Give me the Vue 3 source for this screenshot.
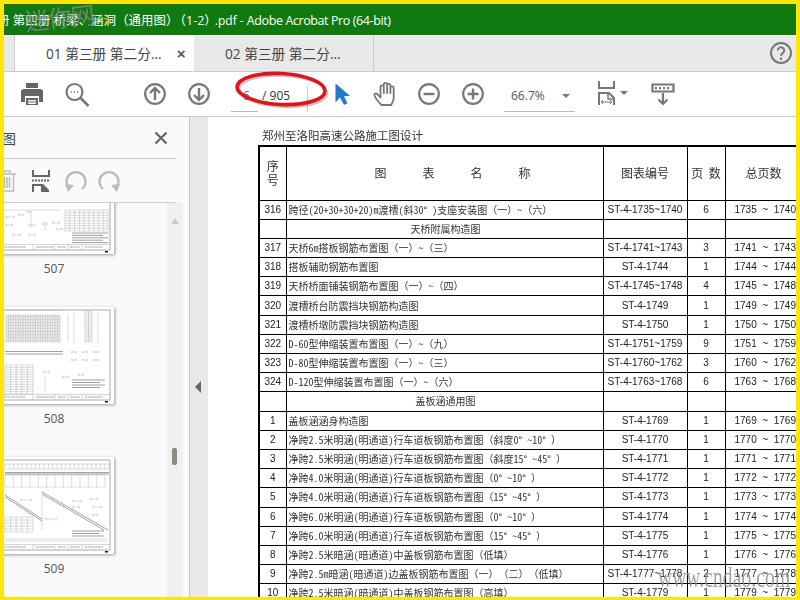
<template>
  <div class="frame">
    <div class="titlebar"><span class="t-cjk">册 第四册 桥梁、涵洞（通用图）</span><span class="t-cjk t-part">（1-2）</span><span class="t-pdf">.pdf - </span><span class="t-app">Adobe Acrobat Pro (64-bit)</span></div>

    <div class="tabs">
      <div class="tab active"><span>01 第三册 第二分...</span><b class="close">×</b></div>
      <div class="tab"><span>02 第三册 第二分...</span></div>
      <svg class="help" viewBox="0 0 24 24" width="24" height="24">
        <circle cx="12" cy="12" r="10" fill="none" stroke="#777" stroke-width="2" />
        <path d="M8.8 9.5a3.2 3.2 0 1 1 5 2.6c-1.200.8-1.800 1.300-1.800 2.700" fill="none" stroke="#777" stroke-width="2" />
        <circle cx="12" cy="17.800" r="1.300" fill="#777" />
      </svg>
    </div>

    <div class="toolbar">
      <svg class="tool print" viewBox="0 0 32 32">
        <path d="M10 5h12v5H10z" fill="#666" />
        <path d="M8 11h16a3 3 0 0 1 3 3v10h-4v-6H9v6H5V14a3 3 0 0 1 3-3z" fill="#666" />
        <path d="M10 20h12v7H10z" fill="#666" /><path d="M12 22h8v1.500h-8zM12 24.500h8V26h-8z" fill="#fff" />
      </svg>
      <svg class="tool search" viewBox="0 0 32 32">
        <circle cx="13.500" cy="14" r="8" fill="none" stroke="#777" stroke-width="2.200" />
        <path d="M19.500 20l8 8" stroke="#777" stroke-width="2.600" />
        <path d="M9.800 14h1.300M12.900 14h1.300M16 14h1.300" stroke="#777" stroke-width="1.400" />
      </svg>
      <svg class="tool up" viewBox="0 0 32 32">
        <circle cx="16" cy="16" r="9.800" fill="none" stroke="#777" stroke-width="2.200" />
        <path d="M16 22V10M11 15l5-5 5 5" fill="none" stroke="#777" stroke-width="2.400" />
      </svg>
      <svg class="tool down" viewBox="0 0 32 32">
        <circle cx="16" cy="16" r="9.800" fill="none" stroke="#777" stroke-width="2.200" />
        <path d="M16 10v12M11 17l5 5 5-5" fill="none" stroke="#777" stroke-width="2.400" />
      </svg>
      <div class="field">6</div>
      <div class="count">/ 905</div>
      <svg class="tool cursor" viewBox="0 0 32 32">
        <path d="M9.500 5.500v19l4.500-5 4 7.500 3.500-1.800-3.500-7 6-.4z" fill="#2678c8" />
      </svg>
      <svg class="tool hand" viewBox="0 0 32 32">
        <path transform="translate(2.500 0)" d="M11 27c-2-2-6-7-7-9.500-.6-1.700 1.500-2.700 2.800-1.400L10 19.500V9c0-2.300 3.300-2.300 3.300 0v6V6.500c0-2.300 3.300-2.300 3.300 0V15 7.500c0-2.300 3.300-2.300 3.300 0V15 10c0-2.300 3.300-2.300 3.300 0v10c0 3-1.500 5-2.600 7z" fill="none" stroke="#777" stroke-width="1.800" stroke-linejoin="round" />
      </svg>
      <svg class="tool minus" viewBox="0 0 32 32">
        <circle cx="16" cy="16" r="9.800" fill="none" stroke="#777" stroke-width="2.200" />
        <path d="M10.500 16h11" stroke="#777" stroke-width="2.400" />
      </svg>
      <svg class="tool plus" viewBox="0 0 32 32">
        <circle cx="16" cy="16" r="9.800" fill="none" stroke="#777" stroke-width="2.200" />
        <path d="M10.500 16h11M16 10.500v11" stroke="#777" stroke-width="2.400" />
      </svg>
      <div class="zoomsel"><span>66.7%</span><i class="caret"></i></div>
      <svg class="fit" viewBox="0 0 40 32" width="40" height="32">
        <path d="M9 3v7h15V3" fill="none" stroke="#777" stroke-width="2" />
        <path d="M9 27V15h10l5 5v7" fill="none" stroke="#777" stroke-width="2" />
        <path d="M18 15v6h6" fill="none" stroke="#777" stroke-width="1.500" />
        <path d="M11 24h11M13 22l-2 2 2 2M20 22l2 2-2 2" fill="none" stroke="#777" stroke-width="1" />
        <path d="M30 13h8l-4 4z" fill="#777" />
      </svg>
      <svg class="tool keys" viewBox="0 0 32 32">
        <path d="M5.500 6.500h21v7h-21z" fill="none" stroke="#777" stroke-width="2.200" />
        <path d="M8 9h2v2.200H8zM12 9h2v2.200h-2zM16 9h2v2.200h-2zM20 9h2v2.200h-2z" fill="#777" />
        <path d="M16 15v11M11.500 21.500L16 26l4.500-4.500" fill="none" stroke="#777" stroke-width="2.200" />
      </svg>
    </div>

    <div class="body">
      <aside class="pane">
        <div class="pane-head">
          <span class="pane-title">图</span>
          <svg class="pane-close" viewBox="0 0 14 14" width="14" height="14"><path d="M1.500 1.500l11 11M12.500 1.500l-11 11" stroke="#666" stroke-width="2.200" /></svg>
        </div>
        <div class="pane-tools">
          <svg class="trash" viewBox="0 0 20 24" width="20" height="24">
            <path d="M1 5h18M7 5V2h6v3M3.500 5v17h13V5M7.500 8v11M10 8v11M12.500 8v11" fill="none" stroke="#bbb" stroke-width="1.500" />
          </svg>
          <svg class="crop" viewBox="0 0 18 24" width="18" height="24">
            <path d="M1 1v6h16V1" fill="none" stroke="#666" stroke-width="2" />
            <path d="M0 11.500h18" stroke="#666" stroke-width="2" stroke-dasharray="2 1" />
            <path d="M1 23v-7h9l6 6v1" fill="none" stroke="#666" stroke-width="2" />
            <path d="M9 15h2l6 6v2H9z" fill="#666" />
          </svg>
          <svg class="rot left" viewBox="0 0 24 24" width="24" height="24">
            <path d="M6 20a9.500 9.500 0 1 1 12 0" fill="none" stroke="#bbb" stroke-width="2.400" />
            <path d="M1 15l9 1-6 7z" fill="#bbb" />
          </svg>
          <svg class="rot right" viewBox="0 0 24 24" width="24" height="24">
            <path d="M6 20a9.500 9.500 0 1 1 12 0" fill="none" stroke="#bbb" stroke-width="2.400" />
            <path d="M23 15l-9 1 6 7z" fill="#bbb" />
          </svg>
        </div>
        <div class="pane-list">
          <div class="thumbs">
            <div v-for="t in thumbs" :key="t.no" class="thumb-item">
              <svg class="thumb" viewBox="-6 0 120 97" width="120" height="97">
                <rect x="-6" width="120" height="97" fill="#fff" />
                <g class="ink">
                  <path :d="t.thin" fill="none" stroke="#999" stroke-width=".35" />
                  <path :d="t.dark" fill="none" stroke="#888" stroke-width=".8" />
                  <path d="M-6 3h116v90H-6" fill="none" stroke="#aaa" stroke-width="1" />
                  <path d="M-6 87.500h116M33 87.500v5.500M55 87.500v5.500M68 87.500v5.500M82 87.500v5.500" fill="none" stroke="#aaa" stroke-width=".5" />
                  <path d="M0 90h26M36 90h18M58 90h8M70 90h10M85 90h18" fill="none" stroke="#999" stroke-width="1" stroke-dasharray="2 .6" />
                </g>
                <path d="M105 94h3v1.500h-3z" fill="#111" />
              </svg>
              <div class="thumb-no">{{ t.no }}</div>
            </div>
          </div>
          <div class="scroll">
            <i class="scroll-up"></i>
            <i class="scroll-thumb"></i>
          </div>
        </div>
      </aside>

      <div class="handle"><i></i></div>

      <main class="page">
        <div class="doc-title">郑州至洛阳高速公路施工图设计</div>
        <table class="sheet">
          <colgroup>
            <col class="c1" /><col class="c2" /><col class="c3" /><col class="c4" /><col class="c5" />
          </colgroup>
          <tbody>
            <tr class="head">
              <td class="center">序<br />号</td>
              <td class="center wide">图表名称</td>
              <td class="center">图表编号</td>
              <td class="center">页&nbsp;&nbsp;数</td>
              <td class="total">总页数</td>
            </tr>
            <tr v-for="(r, i) in rows" :key="i" class="row">
              <td class="num">{{ r[0] }}</td>
              <td class="name" :class="{ section: !r[2] }"><span v-for="(p, j) in parts(r[1])" :key="j" :class="{ full: j % 2 }">{{ p }}</span></td>
              <td class="num">{{ r[2] }}</td>
              <td class="num">{{ r[3] }}</td>
              <td class="num range">{{ r[4] }}</td>
            </tr>
          </tbody>
        </table>
      </main>
    </div>

    <span class="mark-top">迷你网</span>
    <span class="mark-bottom">www.cndao.com</span>
    <svg class="ring" viewBox="0 0 100 44" width="100" height="44">
      <ellipse cx="50" cy="21" rx="44" ry="15.500" transform="rotate(3 50 21)" fill="none" stroke="#555" stroke-opacity=".35" stroke-width="3" />
      <ellipse cx="48" cy="19" rx="44" ry="15.500" transform="rotate(3 48 19)" fill="none" stroke="#e0141a" stroke-width="3.600" />
    </svg>
  </div>
</template>

<script setup>
// thumbnail line work, coordinates are screen x / thumb y
const grid = (x, y, w, h, cols, rows) => {
  let d = ''
  for (let i = 0; i <= cols; i++) d += `M${x + (w * i) / cols} ${y}v${h}`
  for (let i = 0; i <= rows; i++) d += `M${x} ${y + (h * i) / rows}h${w}`
  return d
}
const bits = (list) => list.map(([x, y, w]) => `M${x} ${y}h${w}M${x + 1} ${y - 1.500}v3M${x + w - 1} ${y - 1.500}v3`).join('')
const lines = (x, y, w, n, gap) => {
  let d = ''
  for (let i = 0; i < n; i++) d += `M${x} ${y + i * gap}h${w - (i % 2) * 5}`
  return d
}

const thumbs = [
  {
    no: 507,
    thin:
      grid(65, 53, 43, 21, 9, 8) +
      bits([[5, 60, 10], [5, 68, 8], [18, 58, 6], [27, 55, 5], [28, 68, 7], [42, 67, 6], [52, 66, 8], [12, 78, 9], [28, 78, 8], [56, 72, 7]]) +
      'M0 53h60M31 57v14M45 64v10',
    dark: lines(72, 76, 36, 5, 2.400),
  },
  {
    no: 508,
    thin:
      grid(6, 8, 54, 27, 22, 18) +
      grid(85, 4, 7, 31, 2, 16) +
      grid(5, 58, 28, 29, 5, 12) +
      bits([[71, 45, 6], [82, 45, 6], [93, 45, 6], [71, 53, 6], [82, 53, 6], [93, 53, 6], [43, 65, 7], [62, 70, 7], [78, 68, 6]]) +
      'M5 3h58M74 6v30M98 6v30M45 70v14M68 8v26',
    dark: 'M5 47h58M5 44.500h58' + lines(72, 73, 33, 4, 2.500),
  },
  {
    no: 509,
    thin:
      grid(5, 7, 104, 5, 24, 1) +
      grid(5, 18, 100, 12, 12, 1) +
      grid(5, 60, 28, 15, 5, 5) +
      bits([[72, 44, 10], [72, 50, 8], [90, 42, 8], [92, 50, 10], [92, 58, 6], [45, 62, 12], [20, 43, 12]]) +
      'M42 35v38M5 82h102M5 84h102',
    dark:
      'M5 15.500h104M5 17h104M5 38l37 24M5 40l37 24M42 35l66 38M42 37l62 36' + lines(72, 74, 32, 3, 2.500),
  },
]

// full-width brackets must stay out of the half-width feature
const parts = (s) => s.split(/([（）]+)/)
const spaced = (a, b) => `${a}  ~  ${b}`
const item = (no, name, a, b) => [no, name, a === b ? `ST-4-${a}` : `ST-4-${a}~${b}`, b - a + 1, spaced(a, b)]

const rows = [
  item(316, '跨径(20+30+30+20)m渡槽(斜30° )支座安装图（一）~（六）', 1735, 1740),
  ['', '天桥附属构造图', '', '', ''],
  item(317, '天桥6m搭板钢筋布置图（一）~（三）', 1741, 1743),
  item(318, '搭板辅助钢筋布置图', 1744, 1744),
  item(319, '天桥桥面铺装钢筋布置图（一）~（四）', 1745, 1748),
  item(320, '渡槽桥台防震挡块钢筋构造图', 1749, 1749),
  item(321, '渡槽桥墩防震挡块钢筋构造图', 1750, 1750),
  item(322, 'D-60型伸缩装置布置图（一）~（九）', 1751, 1759),
  item(323, 'D-80型伸缩装置布置图（一）~（三）', 1760, 1762),
  item(324, 'D-120型伸缩装置布置图（一）~（六）', 1763, 1768),
  ['', '盖板涵通用图', '', '', ''],
  item(1, '盖板涵涵身构造图', 1769, 1769),
  item(2, '净跨2.5米明涵(明通道)行车道板钢筋布置图（斜度0° ~10° ）', 1770, 1770),
  item(3, '净跨2.5米明涵(明通道)行车道板钢筋布置图（斜度15° ~45° ）', 1771, 1771),
  item(4, '净跨4.0米明涵(明通道)行车道板钢筋布置图（0° ~10° ）', 1772, 1772),
  item(5, '净跨4.0米明涵(明通道)行车道板钢筋布置图（15° ~45° ）', 1773, 1773),
  item(6, '净跨6.0米明涵(明通道)行车道板钢筋布置图（0° ~10° ）', 1774, 1774),
  item(7, '净跨6.0米明涵(明通道)行车道板钢筋布置图（15° ~45° ）', 1775, 1775),
  item(8, '净跨2.5米暗涵(暗通道)中盖板钢筋布置图（低填）', 1776, 1776),
  item(9, '净跨2.5m暗涵(暗通道)边盖板钢筋布置图（一）（二）（低填）', 1777, 1778),
  item(10, '净跨2.5米暗涵(暗通道)中盖板钢筋布置图（高填）', 1779, 1779),
]
</script>

<style scoped>
.frame {
  position: relative; width: 800px; height: 600px; box-sizing: border-box; overflow: hidden;
  border: solid #ffe60a; border-width: 4px 4px 3px 4px;
  display: flex; flex-direction: column; background: #fff;
  font-family: "Open Sans", "Noto Sans CJK SC", sans-serif;
  text-spacing-trim: space-all;
}
.titlebar {
  height: 31px; flex: none; background: #107a10; color: #fff; overflow: hidden;
  font-size: 14px; line-height: 31px; white-space: nowrap;
}
.t-cjk { font-size: 12.5px; margin-left: -7px; }
.t-part { margin-left: -5px; margin-right: -2px; }
.t-pdf { font-size: 12px; white-space: pre; }
.t-app { font-size: 12.5px; letter-spacing: -.4px; }
.tabs {
  height: 36px; flex: none; background: #e9e9e9; display: flex; padding-left: 10px;
  box-sizing: border-box; color: #444; font-size: 13.7px; align-items: stretch; position: relative;
}
.tab {
  width: 180px; box-sizing: border-box; border-right: 1px solid #ccc; padding-left: 31px;
  display: flex; align-items: center; white-space: nowrap;
}
.tab.active { background: #fff; border-left: 1px solid #ccc; border-right: 0; }
.close { margin-left: 15px; font: bold 15px "Liberation Sans", sans-serif; color: #555; }
.help { position: absolute; right: 3px; top: 6px; }
.toolbar {
  height: 46px; flex: none; box-sizing: border-box; border-top: 1px solid #ccc; border-bottom: 1px solid #ccc;
  display: flex; align-items: center; padding-left: 12px; background: #fff;
}
.tool { width: 32px; height: 32px; flex: none; }
.search { margin-left: 13px; }
.up { margin-left: 46px; }
.down { margin-left: 12px; }
.field {
  width: 27px; height: 26px; margin: 10px 0 0 16px; flex: none; box-sizing: border-box; border-bottom: 1px solid #bbb;
  font-size: 12.5px; color: #4a6f9a; text-align: right; line-height: 20px; padding-right: 8px;
}
.count {
  width: 50px; height: 26px; flex: none; margin-top: 10px; padding-left: 4px; box-sizing: border-box;
  border-right: 1px solid #ccc; font: 12px/20px "Open Sans", sans-serif; color: #333;
}
.cursor { margin-left: 18px; }
.hand { margin-left: 10px; }
.minus { margin-left: 13px; }
.plus { margin-left: 12px; }
.zoomsel {
  width: 71px; height: 26px; margin: 10px 0 0 15px; flex: none; box-sizing: border-box; border-bottom: 1px solid #bbb;
  font-size: 12px; line-height: 20px; color: #555; padding-left: 7px; display: flex;
}
.caret {
  margin: 8px 0 0 17px; width: 0; height: 0;
  border: solid transparent; border-width: 4px 4px 0; border-top-color: #777;
}
.fit { margin-left: 15px; flex: none; }
.keys { margin-left: 17px; }
.body { flex: 1; min-height: 0; display: flex; }
.pane {
  width: 186px; flex: none; box-sizing: border-box; background: #fafafa; border-right: 1px solid #c8c8c8;
  display: flex; flex-direction: column; overflow: hidden;
}
.pane-head {
  height: 41px; flex: none; margin-right: 13px; border-bottom: 1px solid #ccc; box-sizing: content-box;
  display: flex; align-items: center; justify-content: space-between; font-size: 14px; color: #444;
}
.pane-title { margin-left: -2px; }
.pane-close { margin-right: 8px; }
.pane-tools {
  height: 43px; flex: none; margin-right: 13px; border-bottom: 1px solid #ccc;
  display: flex; align-items: center;
}
.trash { margin-left: -7px; flex: none; }
.crop { margin-left: 15px; flex: none; }
.rot.left { margin-left: 14px; }
.rot.right { margin-left: 9px; }
.pane-list { flex: 1; min-height: 0; display: flex; overflow: hidden; }
.thumbs { width: 163px; flex: none; margin-top: -46px; margin-left: -10px; }
.thumb-item { height: 150px; }
.thumb { display: block; box-shadow: 1px 1px 3px #999; }
.ink { filter: blur(.4px); }
.thumb-no {
  width: 120px; text-align: center; margin-top: 7px; font-size: 12px; line-height: 16px; color: #555;
}
.scroll { width: 16px; margin-left: 10px; background: #f0f0f0; position: relative; flex: none; }
.scroll-up {
  position: absolute; left: 4px; top: 15px; width: 0; height: 0;
  border: solid transparent; border-width: 0 4px 6px; border-bottom-color: #c8c8c8;
}
.scroll-thumb {
  position: absolute; left: 5px; top: 245px; width: 5px; height: 17px; background: #8f8a80; border-radius: 2px;
}
.handle {
  width: 18px; flex: none; background: #e9e9e9; display: flex; align-items: center; justify-content: center;
  padding-top: 60px; box-sizing: border-box; padding-right: 2px;
}
.handle i {
  width: 0; height: 0; border: solid transparent; border-width: 6px 6px 6px 0; border-right-color: #666;
}
.page {
  flex: 1; min-width: 0; overflow: hidden; padding-left: 50px; background: #fff;
  font-family: "Noto Sans CJK SC", sans-serif; filter: blur(.25px);
}
.doc-title {
  margin: 10px 0 0 4px; font-size: 11.5px; line-height: 16px; height: 18px; color: #333; white-space: nowrap;
}
.sheet {
  border-collapse: collapse; table-layout: fixed; width: 590px; border-top: 2px solid #000; border-left: 2px solid #000;
  font-size: 10px; color: #222;
}
.c1 { width: 27px; }
.c2 { width: 317px; }
.c3 { width: 84px; }
.c4 { width: 38px; }
.c5 { width: 124px; }
.sheet td { border: 1px solid #000; padding: 0; overflow: hidden; white-space: nowrap; }
.head { height: 54px; }
.head td { font-size: 12px; line-height: 14px; color: #333; }
.center { text-align: center; }
.wide { letter-spacing: 3em; padding-left: 52px !important; }
.total { padding-left: 20px !important; }
.row { height: 18.2px; }
.row td { line-height: 14px; height: 18.2px; }
.name {
  padding-left: 2px !important; font-feature-settings: "hwid"; color: #333;
}
.full { font-feature-settings: normal; }
.name.section { text-align: center; }
.num { text-align: center; font-family: "Liberation Sans", sans-serif; }
.range { white-space: pre !important; text-align: left; padding-left: 9px !important; }
.mark-top {
  position: absolute; left: 21px; top: 1px; font-size: 24px; line-height: 28px; color: #888; opacity: .8;
  font-family: "Liberation Serif", "Noto Sans CJK TC", serif; transform: rotate(-6deg); letter-spacing: -1px;
}
.mark-bottom {
  position: absolute; left: 654px; top: 562px; font: 19.500px/24px "Liberation Serif", serif; color: #8a8a8a;
  opacity: .8; transform: scaleY(1.5); letter-spacing: .1px;
}
.ring { position: absolute; left: 229px; top: 66px; }
</style>
